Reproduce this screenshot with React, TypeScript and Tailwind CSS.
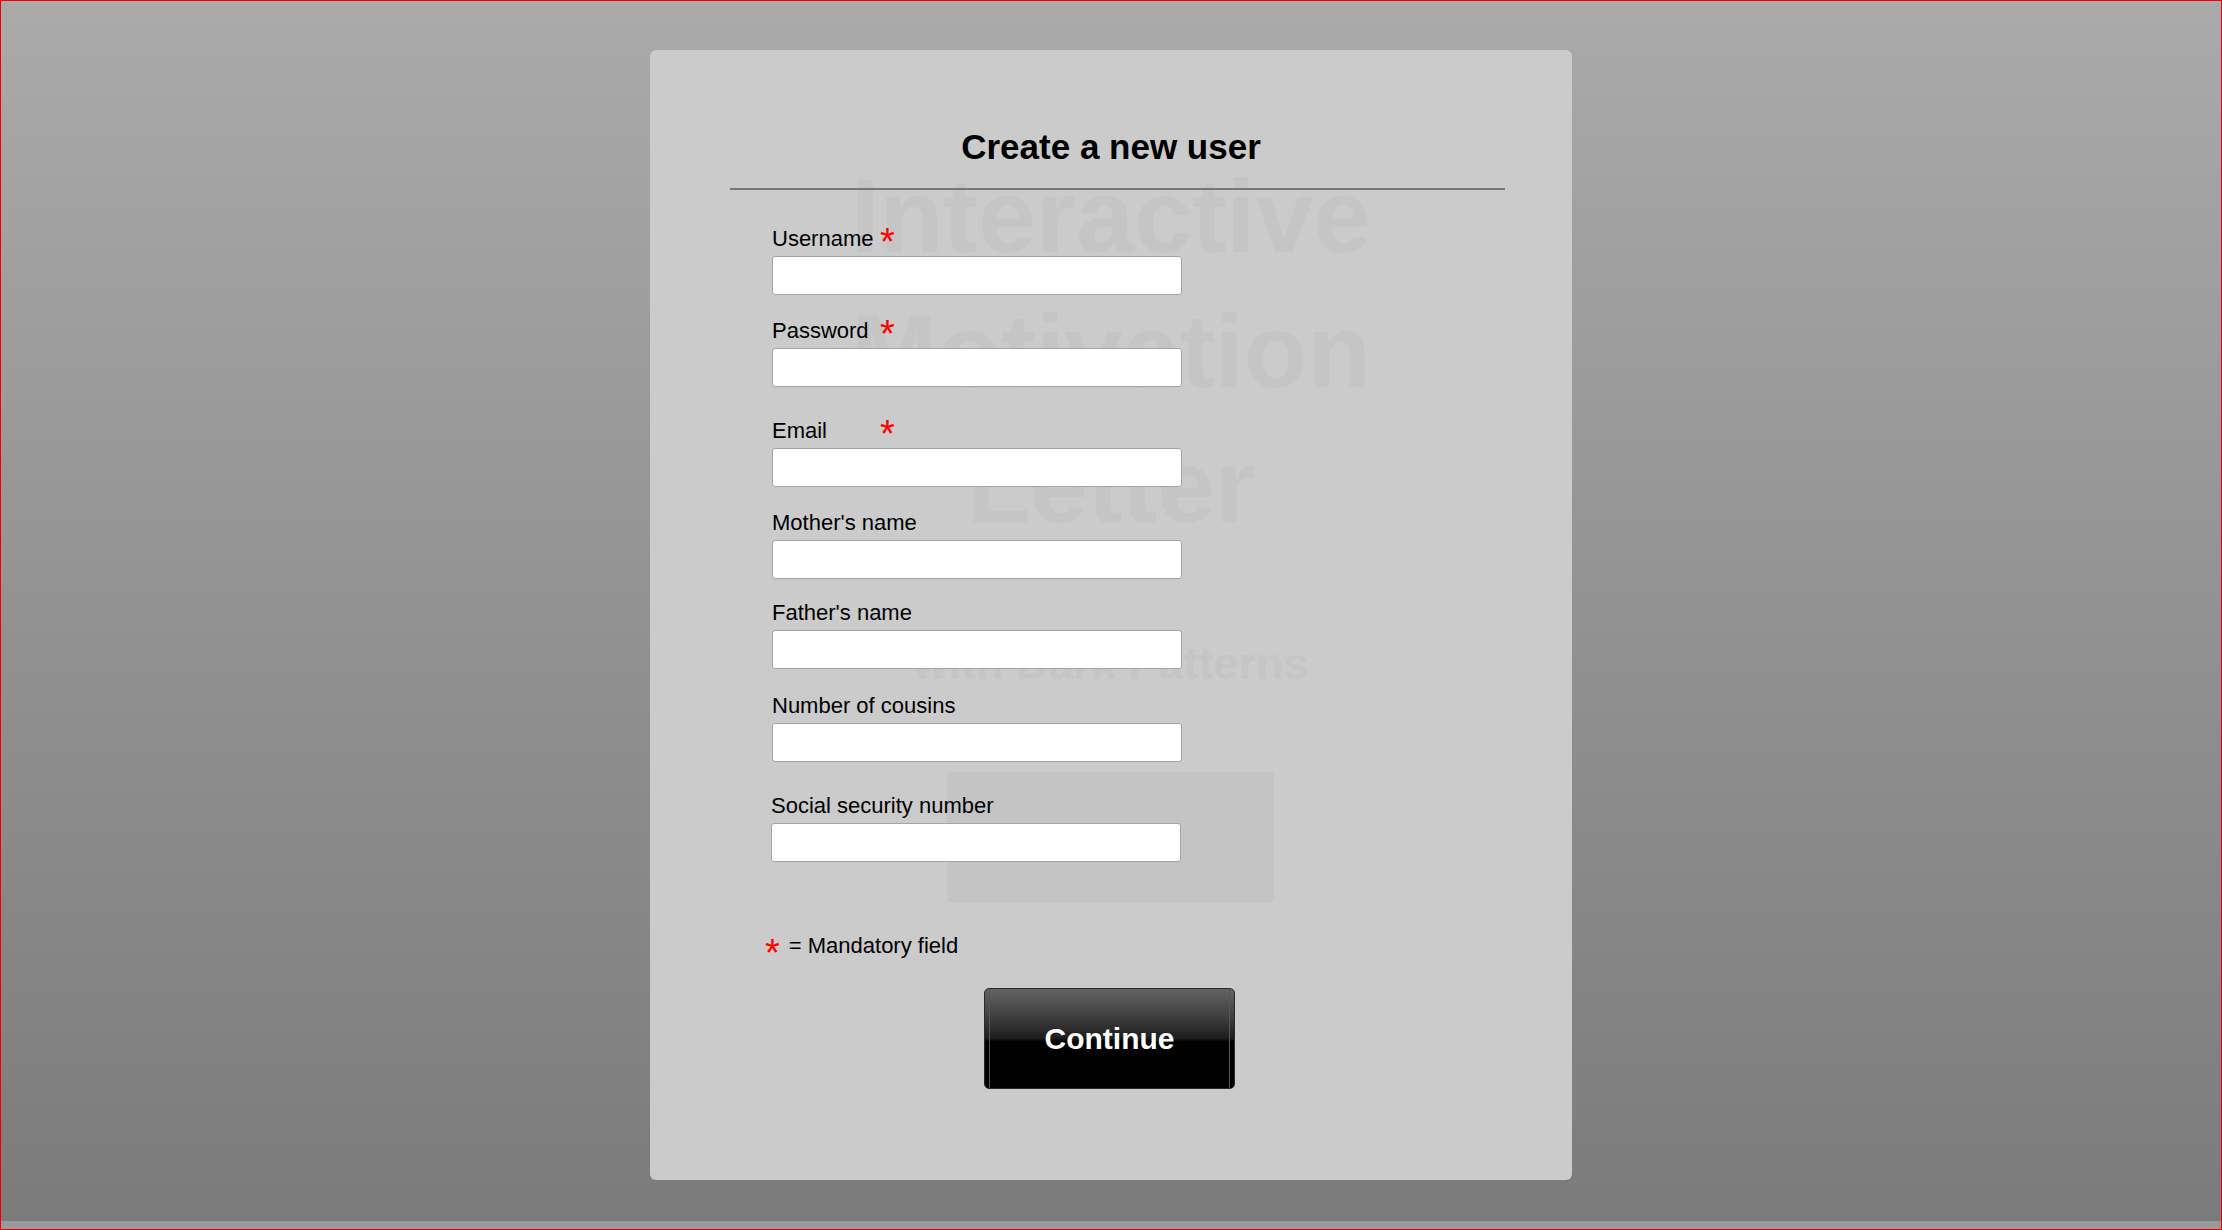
import React from "react";

type Field = { label: string; required?: boolean; mt: string; shift?: string };

const fields: Field[] = [
  { label: "Username", required: true, mt: "mt-[36px]" },
  { label: "Password", required: true, mt: "mt-[23px]" },
  { label: "Email", required: true, mt: "mt-[31px]" },
  { label: "Mother's name", mt: "mt-[23px]" },
  { label: "Father's name", mt: "mt-[21px]" },
  { label: "Number of cousins", mt: "mt-[24px]" },
  { label: "Social security number", mt: "mt-[31px]", shift: "-ml-px" },
];

function Star({ extra = "" }: { extra?: string }) {
  return (
    <span
      className={`inline-block h-[25px] leading-[25px] text-[38px] text-[#ff0000] ${extra}`}
    >
      *
    </span>
  );
}

export default function App() {
  return (
    <div className="h-[1230px] w-full border border-[#ee0000] flex flex-col font-['Liberation_Sans',Arial,sans-serif] text-black overflow-hidden">
      <div className="flex-1 bg-gradient-to-b from-[#aaaaaa] to-[#7b7b7b] flex justify-center pt-[49px]">
        <div className="relative w-[922px] h-[1130px] bg-[#cbcbcb] rounded-[6px] overflow-hidden">
          {/* faint background layer */}
          <div className="absolute left-0 right-0 top-[99px] text-center text-[104px] leading-[135px] font-bold text-[#c5c5c5] select-none">
            <div>Interactive</div>
            <div>Motivation</div>
            <div>Letter</div>
          </div>
          <div className="absolute left-0 right-0 top-[588px] text-center text-[45px] leading-[52px] font-bold text-[#c5c5c5] select-none">
            with Dark Patterns
          </div>
          <div className="absolute left-[297px] top-[722px] w-[327px] h-[130px] rounded-[4px] bg-[#c4c4c4]" />

          <div className="relative flex flex-col pt-[77px]">
            <h1 className="text-center text-[35px] leading-[40px] font-bold">
              Create a new user
            </h1>
            <div className="ml-[80px] mt-[21px] w-[775px] h-[2px] bg-[#777777]" />

            <div className="flex flex-col pl-[122px]">
              {fields.map((f) => (
                <div key={f.label} className={`flex flex-col ${f.mt} ${f.shift ?? ""}`}>
                  <div className="flex h-[25px] text-[22px] leading-[25px]">
                    <span className={f.required ? "w-[108px]" : ""}>{f.label}</span>
                    {f.required && <Star extra="translate-y-[4px]" />}
                  </div>
                  <input
                    type="text"
                    className="mt-[5px] w-[410px] h-[39px] bg-white border border-[#a8a49d] rounded-[3px] outline-none"
                  />
                </div>
              ))}
            </div>

            <div className="mt-[71px] pl-[115px] flex items-start h-[25px] text-[22px] leading-[25px]">
              <Star extra="translate-y-[8px]" />
              <span className="ml-[9px]">= Mandatory field</span>
            </div>

            <button className="mt-[30px] ml-[334px] self-start w-[251px] h-[101px] flex border border-[#2a2a2a] rounded-[5px] bg-[linear-gradient(to_bottom,#646464_0%,#3c3c3c_30%,#1c1c1c_50%,#000000_53%,#000000_100%)] px-[4px]">
              <span className="flex-1 h-full flex items-center justify-center border-x border-[#565656] text-white text-[30px] font-bold">
                Continue
              </span>
            </button>
          </div>
        </div>
      </div>
      <div className="h-[8px] bg-[#999999]" />
    </div>
  );
}
